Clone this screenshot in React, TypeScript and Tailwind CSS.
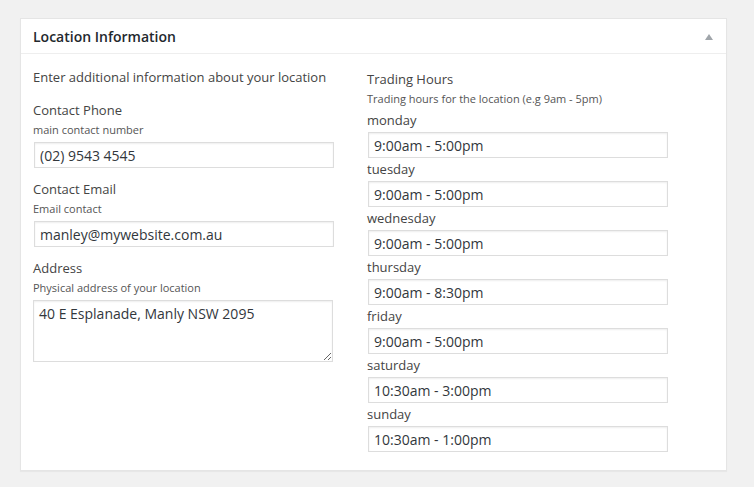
const days: { name: string; hours: string }[] = [
  { name: "monday", hours: "9:00am - 5:00pm" },
  { name: "tuesday", hours: "9:00am - 5:00pm" },
  { name: "wednesday", hours: "9:00am - 5:00pm" },
  { name: "thursday", hours: "9:00am - 8:30pm" },
  { name: "friday", hours: "9:00am - 5:00pm" },
  { name: "saturday", hours: "10:30am - 3:00pm" },
  { name: "sunday", hours: "10:30am - 1:00pm" },
];

const inputCls =
  "block h-[26px] w-[300px] border border-[#dddddd] bg-white pl-[5px] text-[14px] text-[#32373c] shadow-[inset_0_1px_2px_rgba(0,0,0,0.07)] outline-none";

function Field({ label, desc, value }: { label: string; desc: string; value: string }) {
  return (
    <div className="mt-[11px]">
      <div className="text-[13px] leading-[20px] text-[#444]">{label}</div>
      <div className="text-[11px] leading-[20px] text-[#555]">{desc}</div>
      <input className={inputCls + " mt-[2px] ml-px"} defaultValue={value} readOnly />
    </div>
  );
}

export default function App() {
  return (
    <div
      className="min-h-screen bg-[#f1f1f1] pt-[18px] pl-[20px]"
      style={{ fontFamily: '"Open Sans", "Liberation Sans", sans-serif' }}
    >
      <div className="w-[707px] border border-[#e5e5e5] bg-white shadow-[0_1px_1px_rgba(0,0,0,0.04)]">
        <div className="flex h-[35px] items-center justify-between border-b border-[#eeeeee] pl-[12px] pr-[13px]">
          <h2 className="text-[14px] font-semibold text-[#23282d]">Location Information</h2>
          <svg width="8" height="6" viewBox="0 0 8 6" className="mt-px">
            <path d="M0 6 L4 0 L8 6 Z" fill="#a0a5aa" />
          </svg>
        </div>
        <div className="flex pl-[12px] pt-[13px] pb-[18px]">
          <div className="w-[334px]">
            <div className="text-[13px] leading-[20px] text-[#444]">
              Enter additional information about your location
            </div>
            <div className="pt-[2px]">
              <Field label="Contact Phone" desc="main contact number" value="(02) 9543 4545" />
              <Field label="Contact Email" desc="Email contact" value="manley@mywebsite.com.au" />
              <div className="mt-[11px]">
                <div className="text-[13px] leading-[20px] text-[#444]">Address</div>
                <div className="text-[11px] leading-[20px] text-[#555]">
                  Physical address of your location
                </div>
                <textarea
                  className="mt-[2px] block h-[62px] w-[300px] border border-[#dddddd] bg-white px-[5px] pt-[3px] text-[14px] leading-[20px] text-[#32373c] shadow-[inset_0_1px_2px_rgba(0,0,0,0.07)] outline-none"
                  defaultValue="40 E Esplanade, Manly NSW 2095"
                  readOnly
                />
              </div>
            </div>
          </div>
          <div className="pt-[2px]">
            <div className="text-[13px] leading-[20px] text-[#444]">Trading Hours</div>
            <div className="text-[11px] leading-[20px] text-[#555]">
              Trading hours for the location (e.g 9am - 5pm)
            </div>
            {days.map((d) => (
              <div key={d.name}>
                <div className="text-[13px] leading-[23px] text-[#444]">{d.name}</div>
                <input className={inputCls + " ml-px"} defaultValue={d.hours} readOnly />
              </div>
            ))}
          </div>
        </div>
      </div>
    </div>
  );
}
